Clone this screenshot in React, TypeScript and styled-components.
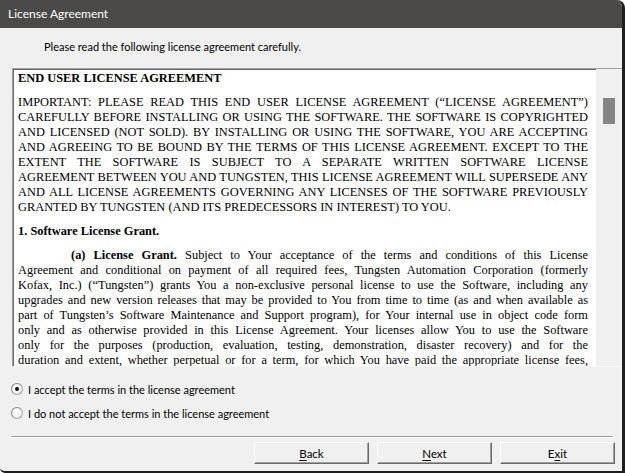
import React, { useState } from 'react'
import styled, { createGlobalStyle } from 'styled-components'

const GlobalStyle = createGlobalStyle`
  html, body {
    margin: 0;
    padding: 0;
    background: #ffffff;
  }
  * { box-sizing: border-box; }
`

const uiFont = `Lato, "Liberation Sans", sans-serif`

// the agreement is shown the way the installer lays it out, one justified line at a time
const intro = [
    'IMPORTANT: PLEASE READ THIS END USER LICENSE AGREEMENT (“LICENSE AGREEMENT”)',
    'CAREFULLY BEFORE INSTALLING OR USING THE SOFTWARE. THE SOFTWARE IS COPYRIGHTED',
    'AND LICENSED (NOT SOLD). BY INSTALLING OR USING THE SOFTWARE, YOU ARE ACCEPTING',
    'AND AGREEING TO BE BOUND BY THE TERMS OF THIS LICENSE AGREEMENT. EXCEPT TO THE',
    'EXTENT THE SOFTWARE IS SUBJECT TO A SEPARATE WRITTEN SOFTWARE LICENSE',
    'AGREEMENT BETWEEN YOU AND TUNGSTEN, THIS LICENSE AGREEMENT WILL SUPERSEDE ANY',
    'AND ALL LICENSE AGREEMENTS GOVERNING ANY LICENSES OF THE SOFTWARE PREVIOUSLY',
    'GRANTED BY TUNGSTEN (AND ITS PREDECESSORS IN INTEREST) TO YOU.',
]

const grant = [
    'Agreement and conditional on payment of all required fees, Tungsten Automation Corporation (formerly',
    'Kofax, Inc.) (“Tungsten”) grants You a non-exclusive personal license to use the Software, including any',
    'upgrades and new version releases that may be provided to You from time to time (as and when available as',
    'part of Tungsten’s Software Maintenance and Support program), for Your internal use in object code form',
    'only and as otherwise provided in this License Agreement. Your licenses allow You to use the Software',
    'only for the purposes (production, evaluation, testing, demonstration, disaster recovery) and for the',
    'duration and extent, whether perpetual or for a term, for which You have paid the appropriate license fees,',
]

export default function App() {
    const [accepted, setAccepted] = useState(true)
    return (
        <>
            <GlobalStyle />
            <Window>
                <TitleBar>License Agreement</TitleBar>
                <Header>Please read the following license agreement carefully.</Header>
                <TextBox>
                    <Document>
                        <Para>
                            <Line end bold>END USER LICENSE AGREEMENT</Line>
                        </Para>
                        <Para>
                            {intro.map((text, i) => (
                                <Line key={i} end={i === intro.length - 1}>{text}</Line>
                            ))}
                        </Para>
                        <Para>
                            <Line end bold>1. Software License Grant.</Line>
                        </Para>
                        <Para>
                            <Line indent>
                                <b>(a) License Grant.</b> Subject to Your acceptance of the terms and conditions of this License
                            </Line>
                            {grant.map((text, i) => (
                                <Line key={i}>{text}</Line>
                            ))}
                        </Para>
                    </Document>
                    <ScrollTrack>
                        <ScrollThumb />
                    </ScrollTrack>
                </TextBox>
                <Choices>
                    <Choice onClick={() => setAccepted(true)}>
                        <RadioMark checked={accepted} />
                        I accept the terms in the license agreement
                    </Choice>
                    <Choice onClick={() => setAccepted(false)}>
                        <RadioMark checked={!accepted} />
                        I do not accept the terms in the license agreement
                    </Choice>
                </Choices>
                <Separator />
                <ButtonRow>
                    <Button><u>B</u>ack</Button>
                    <Button><u>N</u>ext</Button>
                    <Button>E<u>x</u>it</Button>
                </ButtonRow>
            </Window>
        </>
    )
}

const Window = styled.div`
    width: 625px;
    height: 473px;
    display: flex;
    flex-direction: column;
    background: #f0f0f0;
    border-right: 3px solid #1f1f1f;
    border-bottom: 2px solid #1f1f1f;
    border-top-right-radius: 8px;
    border-bottom-left-radius: 5px;
    overflow: hidden;
    font-family: ${uiFont};
    font-size: 11px;
    color: #000;
`
const TitleBar = styled.div`
    height: 28px;
    flex: none;
    background: #4b4a48;
    color: #ffffff;
    font-size: 12px;
    line-height: 28px;
    padding-left: 8px;
    margin-right: -3px;
`
const Header = styled.div`
    height: 40px;
    flex: none;
    padding: 11px 0 0 44px;
    line-height: 16px;
`
const TextBox = styled.div`
    height: 299px;
    flex: none;
    margin-left: 12px;
    display: flex;
    background: #ffffff;
    border-top: 1px solid #a0a0a0;
    border-left: 1px solid #a0a0a0;
    border-bottom: 1px solid #f8f8f8;
    box-shadow: inset 1px 1px 0 #6a6a6a;
    overflow: hidden;
`
const Document = styled.div`
    flex: 1;
    padding: 2px 8px 0 5px;
    font-family: "Liberation Serif", "Times New Roman", serif;
    font-size: 12.4px;
    line-height: 15px;
    color: #000;
    overflow: hidden;
`
const Para = styled.div`
    margin-bottom: 9px;
`
const Line = styled.span<{ end?: boolean; bold?: boolean; indent?: boolean }>`
    display: block;
    text-align: justify;
    text-align-last: ${p => (p.end ? 'left' : 'justify')};
    font-weight: ${p => (p.bold ? 'bold' : 'normal')};
    padding-left: ${p => (p.indent ? '53px' : '0')};
`
const ScrollTrack = styled.div`
    width: 26px;
    flex: none;
    background: #f0f0f0;
    padding: 29px 0 0 7px;
`
const ScrollThumb = styled.div`
    width: 12px;
    height: 26px;
    background: #858585;
`
const Choices = styled.div`
    display: flex;
    flex-direction: column;
    gap: 6px;
    padding: 13px 0 0 11px;
`
const Choice = styled.label`
    display: flex;
    align-items: center;
    height: 18px;
    gap: 5px;
    cursor: default;
`
const RadioMark = styled.span<{ checked: boolean }>`
    width: 12px;
    height: 12px;
    border-radius: 50%;
    border: 1px solid #a6a6a6;
    border-top-color: #8a8a8a;
    border-left-color: #8a8a8a;
    background: radial-gradient(circle at 35% 35%, #ffffff 0%, #ececec 70%, #dcdcdc 100%);
    display: flex;
    align-items: center;
    justify-content: center;
    &::after {
        content: '';
        width: 4px;
        height: 4px;
        border-radius: 50%;
        background: ${p => (p.checked ? '#111' : 'transparent')};
    }
`
const Separator = styled.div`
    margin: 14px 9px 0 11px;
    height: 2px;
    border-top: 1px solid #a0a0a0;
    border-bottom: 1px solid #ffffff;
`
const ButtonRow = styled.div`
    display: flex;
    justify-content: flex-end;
    gap: 8px;
    margin-top: 4px;
    padding-right: 7px;
`
const Button = styled.button`
    width: 115px;
    height: 22px;
    padding: 0;
    background: #f0f0f0;
    font-family: ${uiFont};
    font-size: 11.5px;
    color: #000;
    border: 1px solid;
    border-color: #ffffff #6a6a6a #6a6a6a #ffffff;
    box-shadow: inset -1px -1px 0 #a0a0a0;
    border-radius: 0;
    u { text-decoration-thickness: 1px; text-underline-offset: 2px; }
`
